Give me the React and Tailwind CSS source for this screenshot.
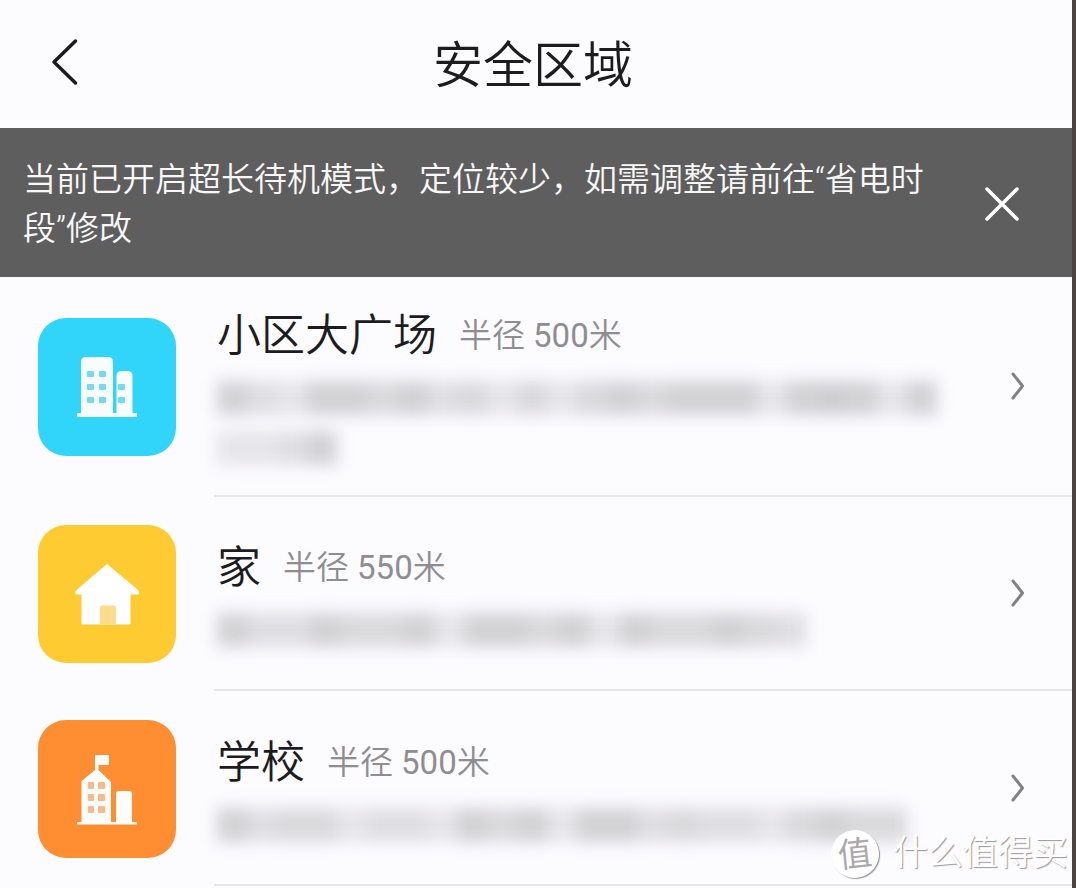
import React from "react";

const zones = [
  {
    name: "小区大广场",
    radius: 500,
    icon: "building",
    tile: "bg-[#31d5fa]",
    size: "h-[220px]",
    bar: "w-[30px]",
    lines: [
      [7, 5, 4, 7, 7, 6, 7, 5, 6, 4, 6, 4, 6, 7, 6, 7, 7, 7, 4, 7, 8, 7, 4, 7],
      [4, 4, 5, 7],
    ],
  },
  {
    name: "家",
    radius: 550,
    icon: "house",
    tile: "bg-[#ffcb33]",
    size: "h-[194px]",
    bar: "w-[31px]",
    lines: [[7, 5, 5, 7, 6, 6, 7, 4, 7, 7, 6, 7, 4, 7, 6, 6, 7, 6, 5]],
  },
  {
    name: "学校",
    radius: 500,
    icon: "school",
    tile: "bg-[#ff8e33]",
    size: "h-[195px]",
    bar: "w-[30px]",
    lines: [[7, 5, 6, 6, 4, 5, 5, 4, 7, 6, 7, 4, 7, 7, 5, 6, 5, 5, 4, 6, 7, 6, 6]],
  },
];

function BuildingIcon() {
  return (
    <svg viewBox="0 0 138 138" className="size-full" aria-hidden="true">
      <g fill="#f7fdff">
        <path d="M43 97V44q0-5 5-5h22q5 0 5 5v53z" />
        <path d="M78.500 97V58q0-5 5-5h6q5 0 5 5v39z" />
        <rect x="39" y="95" width="60" height="4" rx="1" />
      </g>
      <g fill="#75d9ef">
        <rect x="49" y="53" width="7" height="6" rx="1" />
        <rect x="61" y="53" width="7" height="6" rx="1" />
        <rect x="49" y="66" width="7" height="6" rx="1" />
        <rect x="61" y="66" width="7" height="6" rx="1" />
        <rect x="49" y="79" width="7" height="6" rx="1" />
        <rect x="61" y="79" width="7" height="6" rx="1" />
        <rect x="80" y="66" width="7" height="6" rx="1" />
        <rect x="80" y="79" width="7" height="6" rx="1" />
      </g>
    </svg>
  );
}

function HouseIcon() {
  return (
    <svg viewBox="0 0 138 138" className="size-full" aria-hidden="true">
      <path
        d="M69 39.500 99.500 65q1.500 1.500 1 4H92v30H44V69h-6q-.5-2.500 1-4z"
        fill="#fff"
        stroke="#fff"
        strokeWidth="1"
        strokeLinejoin="round"
      />
      <path d="M62 99V83q0-2.500 2.500-2.500h11q2.500 0 2.500 2.500v16z" fill="#ffdc8b" />
    </svg>
  );
}

function SchoolIcon() {
  return (
    <svg viewBox="0 0 138 138" className="size-full" aria-hidden="true">
      <g fill="#fffdfa">
        <path d="M57 35h14v10H60.500v5L73 62v41H43.500V61L57 50z" />
        <path d="M78 103V74q0-3 3-3h10q3 0 3 3v29z" />
        <rect x="39" y="102" width="60" height="2.500" rx="1" />
      </g>
      <g fill="#fbb98b">
        <rect x="50" y="62" width="6" height="7" rx="1" />
        <rect x="60" y="62" width="7" height="7" rx="1" />
        <rect x="50" y="74" width="6" height="7" rx="1" />
        <rect x="60" y="74" width="7" height="7" rx="1" />
        <rect x="50" y="86" width="6" height="7" rx="1" />
        <rect x="60" y="86" width="7" height="7" rx="1" />
      </g>
    </svg>
  );
}

const icons = { building: BuildingIcon, house: HouseIcon, school: SchoolIcon };

const shades = {
  4: "bg-[#e6e5e9]",
  5: "bg-[#dfdee2]",
  6: "bg-[#dad9dc]",
  7: "bg-[#d2d1d4]",
  8: "bg-[#cecdd0]",
};

function HiddenAddress({ lines, bar }) {
  return (
    <div className="mt-[6px]" aria-hidden="true">
      {lines.map((line, i) => (
        <div key={i} className="flex h-[50px] items-center blur-[8px]">
          {line.map((shade, j) => (
            <span key={j} className={`h-[34px] shrink ${bar} ${shades[shade]}`} />
          ))}
        </div>
      ))}
    </div>
  );
}

function ZoneRow({ zone }) {
  const Icon = icons[zone.icon];
  return (
    <li>
      <a href="#" className={`flex items-center pl-[38px] ${zone.size}`}>
        <span className={`size-[138px] shrink-0 overflow-hidden rounded-[28px] ${zone.tile}`}>
          <Icon />
        </span>
        <div className="ml-[38px] flex h-full min-w-0 grow items-center border-b-2 border-[#e6e5e8] pr-[46px] pl-[3px]">
          <div className="min-w-0 grow pt-[6px]">
            <div className="flex h-[62px] items-center gap-[22px] whitespace-nowrap">
              <h2 className="text-[44px] leading-[62px] text-[#1c1c1e]">{zone.name}</h2>
              <span className="text-[33px] leading-[62px] text-[#8e8e92]">
                半径 <span className="font-normal">{zone.radius}</span>米
              </span>
            </div>
            <HiddenAddress lines={zone.lines} bar={zone.bar} />
          </div>
          <svg viewBox="0 0 16 30" className="h-[30px] w-4 shrink-0" fill="none" aria-hidden="true">
            <path d="M3 3l9.500 12L3 27" stroke="#828187" strokeWidth="3" strokeLinecap="round" strokeLinejoin="round" />
          </svg>
        </div>
      </a>
    </li>
  );
}

export default function App() {
  return (
    <div
      lang="zh-CN"
      className="relative min-h-screen overflow-hidden border-r-4 border-[#4c4343] bg-[#fcfbfe] font-['Roboto','Noto_Sans_CJK_SC',sans-serif] font-[350]"
    >
      <header className="grid h-32 grid-cols-[128px_1fr_134px] items-center">
        <button type="button" aria-label="返回" className="flex h-full items-center pb-1 pl-[50px]">
          <svg viewBox="0 0 30 48" className="h-12 w-[30px]" fill="none" aria-hidden="true">
            <path d="M25.500 3 4 24l21.500 21" stroke="#1c1c1e" strokeWidth="3.500" strokeLinecap="round" strokeLinejoin="round" />
          </svg>
        </button>
        <h1 className="pt-1 text-center text-[50px] leading-[72px] text-[#1c1c1e]">安全区域</h1>
      </header>

      <section className="flex items-center justify-between bg-[#5f5e5e] pt-[27px] pr-[52px] pb-6 pl-[23px]">
        <p className="w-[904px] text-[33px] leading-[49px] text-[#f8f8f8]">
          当前已开启超长待机模式，定位较少，如需调整请前往“省电时段”修改
        </p>
        <button type="button" aria-label="关闭" className="size-9 shrink-0">
          <svg viewBox="0 0 36 36" className="size-9" fill="none" aria-hidden="true">
            <path d="m3 3 30 30M33 3 3 33" stroke="#fff" strokeWidth="3.500" strokeLinecap="round" />
          </svg>
        </button>
      </section>

      <ul>
        {zones.map((zone) => (
          <ZoneRow key={zone.name} zone={zone} />
        ))}
      </ul>

      <div className="pointer-events-none absolute right-1 bottom-[10px] flex items-center gap-[14px] whitespace-nowrap">
        <span className="flex size-12 -rotate-6 items-center justify-center rounded-full bg-white text-[34px] leading-none font-normal text-[#aaa9ac] shadow-[1px_1px_1px_#98979a]">
          值
        </span>
        <span className="text-[35px] leading-[48px] text-white [text-shadow:1px_1px_1px_#98979b]">
          什么值得买
        </span>
      </div>
    </div>
  );
}
